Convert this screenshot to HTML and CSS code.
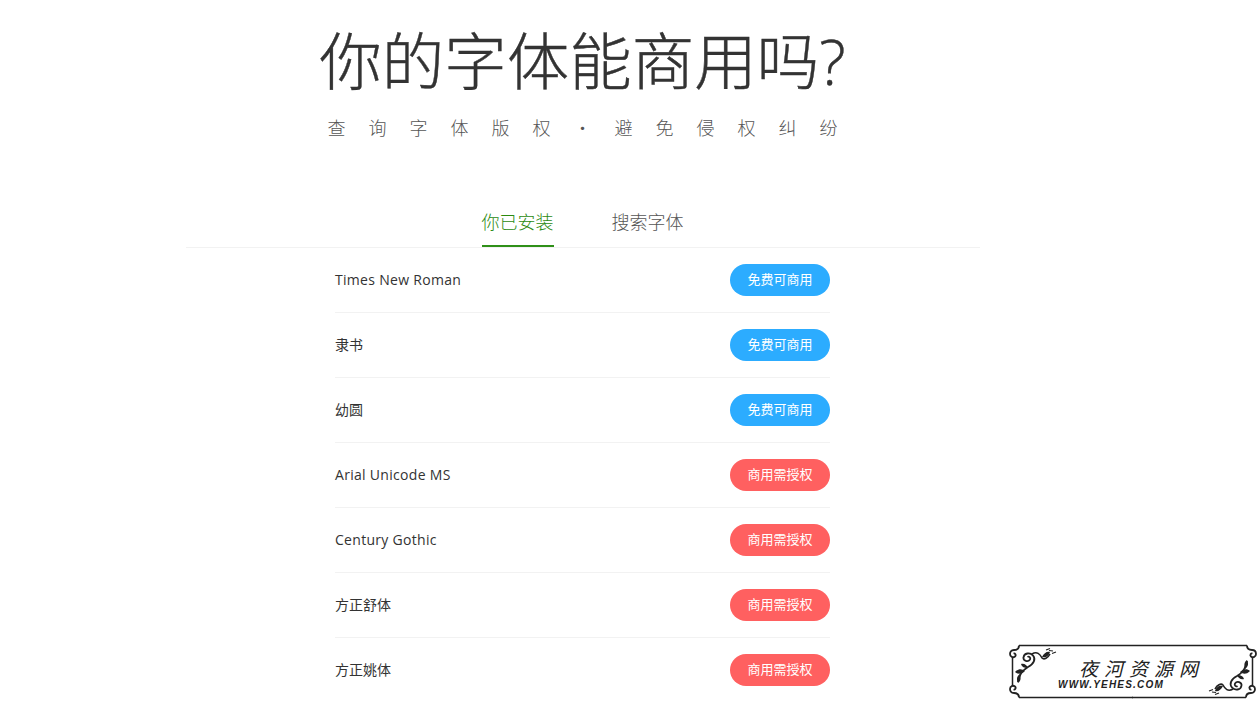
FILE: index.html
```html
<!DOCTYPE html>
<html lang="zh-CN">
<head>
    <meta charset="UTF-8">
    <meta name="viewport" content="width=device-width, initial-scale=1.0">
    <title>你的字体能商用吗?</title>
    <link rel="stylesheet" href="styles.css">
</head>
<body>

<div class="page">
    <div class="hero">
        <h1>你的字体能商用吗?</h1>
        <p class="slogan">查询字体版权・避免侵权纠纷</p>
    </div>

    <div class="tabs">
        <a class="tab active">你已安装</a>
        <a class="tab">搜索字体</a>
    </div>

    <div class="font-list">
        <div class="font-row">
            <span class="font-name latin">Times New Roman</span>
            <span class="badge free">免费可商用</span>
        </div>
        <div class="font-row">
            <span class="font-name">隶书</span>
            <span class="badge free">免费可商用</span>
        </div>
        <div class="font-row">
            <span class="font-name">幼圆</span>
            <span class="badge free">免费可商用</span>
        </div>
        <div class="font-row">
            <span class="font-name latin">Arial Unicode MS</span>
            <span class="badge paid">商用需授权</span>
        </div>
        <div class="font-row">
            <span class="font-name latin">Century Gothic</span>
            <span class="badge paid">商用需授权</span>
        </div>
        <div class="font-row">
            <span class="font-name">方正舒体</span>
            <span class="badge paid">商用需授权</span>
        </div>
        <div class="font-row">
            <span class="font-name">方正姚体</span>
            <span class="badge paid">商用需授权</span>
        </div>
    </div>
</div>

<!-- 右下角水印 -->
<div class="watermark">
    <svg class="wm-frame" width="248" height="56" viewBox="0 0 248 56" fill="none" stroke="#222">
        <defs>
            <g id="wm-corner">
                <!-- 边角卷曲 -->
                <path stroke-width="1.5" d="M10 1.500H124M3.500 14V42"/>
                <path stroke-width="1.8" d="M10 1.500C10 5 8 6 5 6C2 6 1 8 1 10C1 13 4 14 6 12.500C7.500 11 6 9 4.500 9.500"/>
                <!-- 花纹 -->
                <path stroke-width="1.8" d="M9 38C10 30 14 26 19 23C25 20 27 15 24 11.500C21 8 15 9 14.500 13.500C14 17 19 18.500 21 15.500C22 13.500 20 12 18.500 13"/>
                <path stroke-width="1.6" d="M23 10C28 7 31 10 33 14C35 16 39 14 41 10"/>
                <path fill="#222" stroke="none" d="M6 28C10 24 13 25 16 27C13 30 9 31 6 28ZM9 39C7 35 8 32 11 30C12 34 12 37 9 39ZM12 20C15 19 18 21 19 24C15 24 13 23 12 20ZM33 13C35 9 38 7 41 8C40 12 37 14 33 13Z"/>
                <path stroke-width="1.2" d="M37 6L41 4.500M43 9.500L47 8M40 6.500L44 7"/>
            </g>
        </defs>
        <use href="#wm-corner"/>
        <use href="#wm-corner" transform="rotate(180 123.500 27.500)"/>
        <path stroke-width="1.8" d="M10 53.500C10 50 8 49 5 49C2 49 1 47 1 45C1 42 4 41 6 42.500C7.500 44 6 46 4.500 45.500"/>
        <path stroke-width="1.8" d="M238 1.500C238 5 240 6 243 6C246 6 247 8 247 10C247 13 244 14 242 12.500C240.500 11 242 9 243.500 9.500"/>
        <path stroke-width="1.5" d="M10 53.500H124M124 1.500H238"/>
    </svg>
    <div class="wm-title">夜河资源网</div>
    <div class="wm-url">WWW.YEHES.COM</div>
</div>

</body>
</html>
```

FILE: styles.css
```css
html, body {
    overflow: hidden;
}
body {
    margin: 0;
    font-family: "Open Sans", "Noto Sans CJK SC", sans-serif;
    background-color: #fff;
    color: #333;
}
.page {
    width: 1165px;
    height: 701px;
}
.hero {
    text-align: center;
    padding-top: 21px;
}
h1 {
    margin: 0;
    font-size: 62.5px;
    line-height: 80px;
    font-weight: 300;
    color: #333;
    -webkit-text-stroke: .4px #333;
}
.slogan {
    margin: 14px 0 0;
    font-size: 18px;
    line-height: 26px;
    letter-spacing: 23px;
    padding-left: 23px;
    font-weight: 300;
    color: #555;
}
.tabs {
    width: 794px;
    height: 48px;
    margin: 58px auto 0;
    display: flex;
    justify-content: center;
    gap: 58px;
    border-bottom: 1px solid #f2f2f2;
}
.tab {
    font-size: 18px;
    line-height: 46px;
    font-weight: 300;
    color: #555;
}
.tab.active {
    color: #2b8a10;
    height: 46px;
    border-bottom: 2px solid #2f9018;
}
.font-list {
    width: 495px;
    margin: 0 auto;
}
.font-row {
    height: 64px;
    display: flex;
    align-items: center;
    justify-content: space-between;
    border-bottom: 1px solid #f2f2f2;
}
.font-name {
    font-size: 14px;
    color: #333;
    margin-bottom: 2px;
}
.font-name.latin {
    letter-spacing: .3px;
}
.badge {
    width: 100px;
    height: 32px;
    line-height: 30px;
    border-radius: 16px;
    text-align: center;
    font-size: 13px;
    color: #fff;
}
.free {
    background-color: #2cacff;
}
.paid {
    background-color: #ff6060;
}
.watermark {
    position: absolute;
    left: 1009px;
    top: 644px;
    width: 248px;
    height: 56px;
    background-color: #fff;
    color: #222;
}
.wm-frame {
    position: absolute;
    left: 0;
    top: 0;
}
.wm-title {
    position: absolute;
    left: 70px;
    top: 13px;
    font-size: 19px;
    line-height: 22px;
    letter-spacing: 6px;
    font-style: italic;
    font-family: "Noto Sans CJK SC", sans-serif;
}
.wm-url {
    position: absolute;
    left: 49px;
    top: 34px;
    font-size: 10px;
    line-height: 14px;
    letter-spacing: 1.2px;
    font-style: italic;
    font-weight: bold;
    font-family: "Liberation Sans", sans-serif;
}
```
